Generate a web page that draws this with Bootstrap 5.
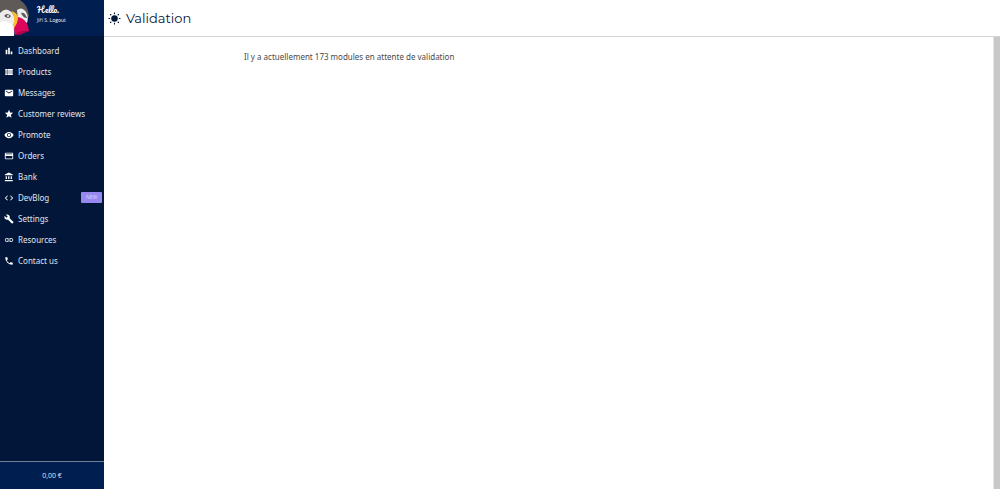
<!DOCTYPE html>
<html lang="fr">
<head>
<meta charset="utf-8">
<meta name="viewport" content="width=device-width, initial-scale=1">
<title>Validation</title>
<link href="https://cdn.jsdelivr.net/npm/bootstrap@5.3.0/dist/css/bootstrap.min.css" rel="stylesheet">
<style>
body { font-family: "Noto Sans", "Open Sans", sans-serif; font-size: 8px; line-height: 12px; color: #4a4a4a; background: #fff; }
.sidebar { width: 104px; background: #011638; color: #e0e5ee; }
.sidebar a { color: inherit; text-decoration: none; }
.profile { height: 36px; background: #011e50; }
.avatar { width: 30px; height: 36px; }
.user-info { font-family: "Open Sans", sans-serif; font-size: 5px; line-height: 10px; padding: 5px 0 0 7px; }
.greeting { font-family: Pacifico, Lato, sans-serif; font-size: 8px; color: #fff; }
.menu { padding-top: 4px; }
.menu .nav-link { height: 21px; padding: 0 3px 0 4px; gap: 4px; }
.menu svg { width: 10px; height: 10px; fill: #fff; }
.menu .new-tag { width: 21px; margin-right: -1px; padding: 2px 0; font-size: 5px; line-height: 7px; font-weight: 400; color: #d9d0fb; background: #9688ee; border-radius: 1px; }
.balance { height: 28px; font-family: "Open Sans", sans-serif; font-size: 7px; background: #011e50; border-top: 1px solid #6d7d9a; }
.topbar { height: 37px; padding-left: 4px; gap: 5px; border-bottom: 1px solid #d4d4d4; }
.topbar svg { width: 13px; height: 13px; }
.topbar h1 { font-family: Montserrat, Inter, sans-serif; font-size: 13px; line-height: 18px; font-weight: 400; color: #011638; }
.content-area { padding-top: 14px; }
.message { padding-left: 140px; }
.rail { width: 7px; background: #c8c8c8; border-left: 1px solid #e6e6e6; }
</style>
</head>
<body>
<div class="d-flex min-vh-100">
  <aside class="sidebar d-flex flex-column flex-shrink-0">
    <div class="profile d-flex">
      <svg class="avatar flex-shrink-0" viewBox="0 0 30 36" aria-hidden="true">
        <path fill="#5f5a57" d="M0 0H20Q28 5 29 16L25 22L12 15L0 13Z"/>
        <path fill="#ececec" d="M0 13Q5 7 10 11Q16 15 15 25L14 36H0Z"/>
        <path fill="#ececec" d="M17 10Q22 6 26 12Q29 17 27 23L18 19Z"/>
        <path fill="#fff" d="M0 22Q6 20 12 24L14 36H0Z"/>
        <path fill="#f7bd33" d="M11 11Q17 12 19 19Q17 25 15 29L13 25Q16 18 11 11Z"/>
        <path fill="#dc075c" d="M18 17Q25 18 28 26L29 31Q22 31 15 35L14 28Q18 23 18 17Z"/>
        <path fill="#a60445" d="M15 35Q19 30 29 31L20 35Z"/>
        <path fill="#5f5a57" d="M4 16Q7 12 11 16Q9 20 4 16ZM21 13Q25 12 27 18Q23 18 21 13Z"/>
        <circle cx="8" cy="16" r="1" fill="#fff"/>
      </svg>
      <div class="user-info"><div class="greeting">Hello.</div><div>Jiří S. <a class="text-white" href="#">Logout</a></div></div>
    </div>
    <nav class="menu nav flex-column flex-nowrap" aria-label="Menu">
      <a class="nav-link d-flex align-items-center" href="#"><svg viewBox="0 0 24 24"><path d="M4 9h4v11H4zM10 4h4v16h-4zM16 13h4v7h-4z"/></svg>Dashboard</a>
      <a class="nav-link d-flex align-items-center" href="#"><svg viewBox="0 0 24 24"><path d="M3 14h4v-4H3v4zm0 5h4v-4H3v4zM3 9h4V5H3v4zm5 5h13v-4H8v4zm0 5h13v-4H8v4zM8 5v4h13V5H8z"/></svg>Products</a>
      <a class="nav-link d-flex align-items-center" href="#"><svg viewBox="0 0 24 24"><path d="M20 4H4a2 2 0 0 0-2 2v12a2 2 0 0 0 2 2h16a2 2 0 0 0 2-2V6a2 2 0 0 0-2-2zm0 4-8 5-8-5V6l8 5 8-5v2z"/></svg>Messages</a>
      <a class="nav-link d-flex align-items-center" href="#"><svg viewBox="0 0 24 24"><path d="M12 17.27 18.18 21l-1.64-7.03L22 9.24l-7.19-.61L12 2 9.19 8.63 2 9.24l5.46 4.73L5.82 21z"/></svg>Customer reviews</a>
      <a class="nav-link d-flex align-items-center" href="#"><svg viewBox="0 0 24 24"><path d="M12 4.5C7 4.5 2.73 7.61 1 12c1.73 4.39 6 7.5 11 7.5s9.27-3.11 11-7.5c-1.73-4.39-6-7.5-11-7.5zM12 17a5 5 0 1 1 0-10 5 5 0 0 1 0 10zm0-8a3 3 0 1 0 0 6 3 3 0 0 0 0-6z"/></svg>Promote</a>
      <a class="nav-link d-flex align-items-center" href="#"><svg viewBox="0 0 24 24"><path d="M20 4H4a2 2 0 0 0-2 2v12a2 2 0 0 0 2 2h16a2 2 0 0 0 2-2V6a2 2 0 0 0-2-2zm0 14H4v-6h16v6zm0-10H4V6h16v2z"/></svg>Orders</a>
      <a class="nav-link d-flex align-items-center" href="#"><svg viewBox="0 0 24 24"><path d="M4 10v7h3v-7H4zm6 0v7h3v-7h-3zM2 22h19v-3H2v3zm14-12v7h3v-7h-3zM11.5 1 2 6v2h19V6l-9.500-5z"/></svg>Bank</a>
      <a class="nav-link d-flex align-items-center" href="#"><svg viewBox="0 0 24 24"><path d="M9.400 16.600 4.800 12l4.600-4.600L8 6l-6 6 6 6 1.400-1.400zm5.200 0 4.600-4.600-4.600-4.600L16 6l6 6-6 6-1.400-1.400z"/></svg>DevBlog<span class="badge new-tag ms-auto">NEW</span></a>
      <a class="nav-link d-flex align-items-center" href="#"><svg viewBox="0 0 24 24"><path d="m22.700 19-9.100-9.100c.9-2.300.4-5-1.500-6.900-2-2-5-2.400-7.400-1.300L9 6 6 9 1.600 4.700C.4 7.100.9 10.100 2.900 12.100c1.900 1.900 4.600 2.400 6.900 1.500l9.100 9.100c.4.4 1 .4 1.400 0l2.300-2.300c.5-.4.5-1.100.1-1.400z"/></svg>Settings</a>
      <a class="nav-link d-flex align-items-center" href="#"><svg viewBox="0 0 24 24"><path d="M3.900 12c0-1.710 1.390-3.100 3.100-3.100h4V7H7a5 5 0 0 0 0 10h4v-1.900H7A3.100 3.100 0 0 1 3.900 12zM8 13h8v-2H8v2zm9-6h-4v1.900h4a3.100 3.100 0 0 1 0 6.200h-4V17h4a5 5 0 0 0 0-10z"/></svg>Resources</a>
      <a class="nav-link d-flex align-items-center" href="#"><svg viewBox="0 0 24 24"><path d="M6.620 10.790a15.150 15.150 0 0 0 6.590 6.590l2.200-2.200c.27-.27.67-.36 1.020-.24 1.120.37 2.330.57 3.570.57.55 0 1 .45 1 1V20c0 .55-.45 1-1 1A17 17 0 0 1 3 4c0-.55.45-1 1-1h3.500c.55 0 1 .45 1 1 0 1.250.2 2.450.57 3.570.11.35.03.74-.25 1.020z"/></svg>Contact us</a>
    </nav>
    <div class="balance d-flex align-items-center justify-content-center mt-auto">0,00 €</div>
  </aside>
  <div class="d-flex flex-column flex-grow-1">
    <header class="topbar d-flex align-items-center">
      <svg viewBox="0 0 24 24" aria-hidden="true"><circle cx="12" cy="12" r="6" fill="#011638"/><path d="M12 1v3M12 20v3M1 12h3M20 12h3M4 4l2 2M18 18l2 2M4 20l2-2M18 6l2-2" stroke="#011638" stroke-width="2"/></svg>
      <h1 class="m-0">Validation</h1>
    </header>
    <div class="d-flex flex-grow-1">
      <main class="content-area flex-grow-1"><p class="message m-0">Il y a actuellement 173 modules en attente de validation</p></main>
      <div class="rail"></div>
    </div>
  </div>
</div>
<script src="https://cdn.jsdelivr.net/npm/bootstrap@5.3.0/dist/js/bootstrap.bundle.min.js"></script>
</body>
</html>
